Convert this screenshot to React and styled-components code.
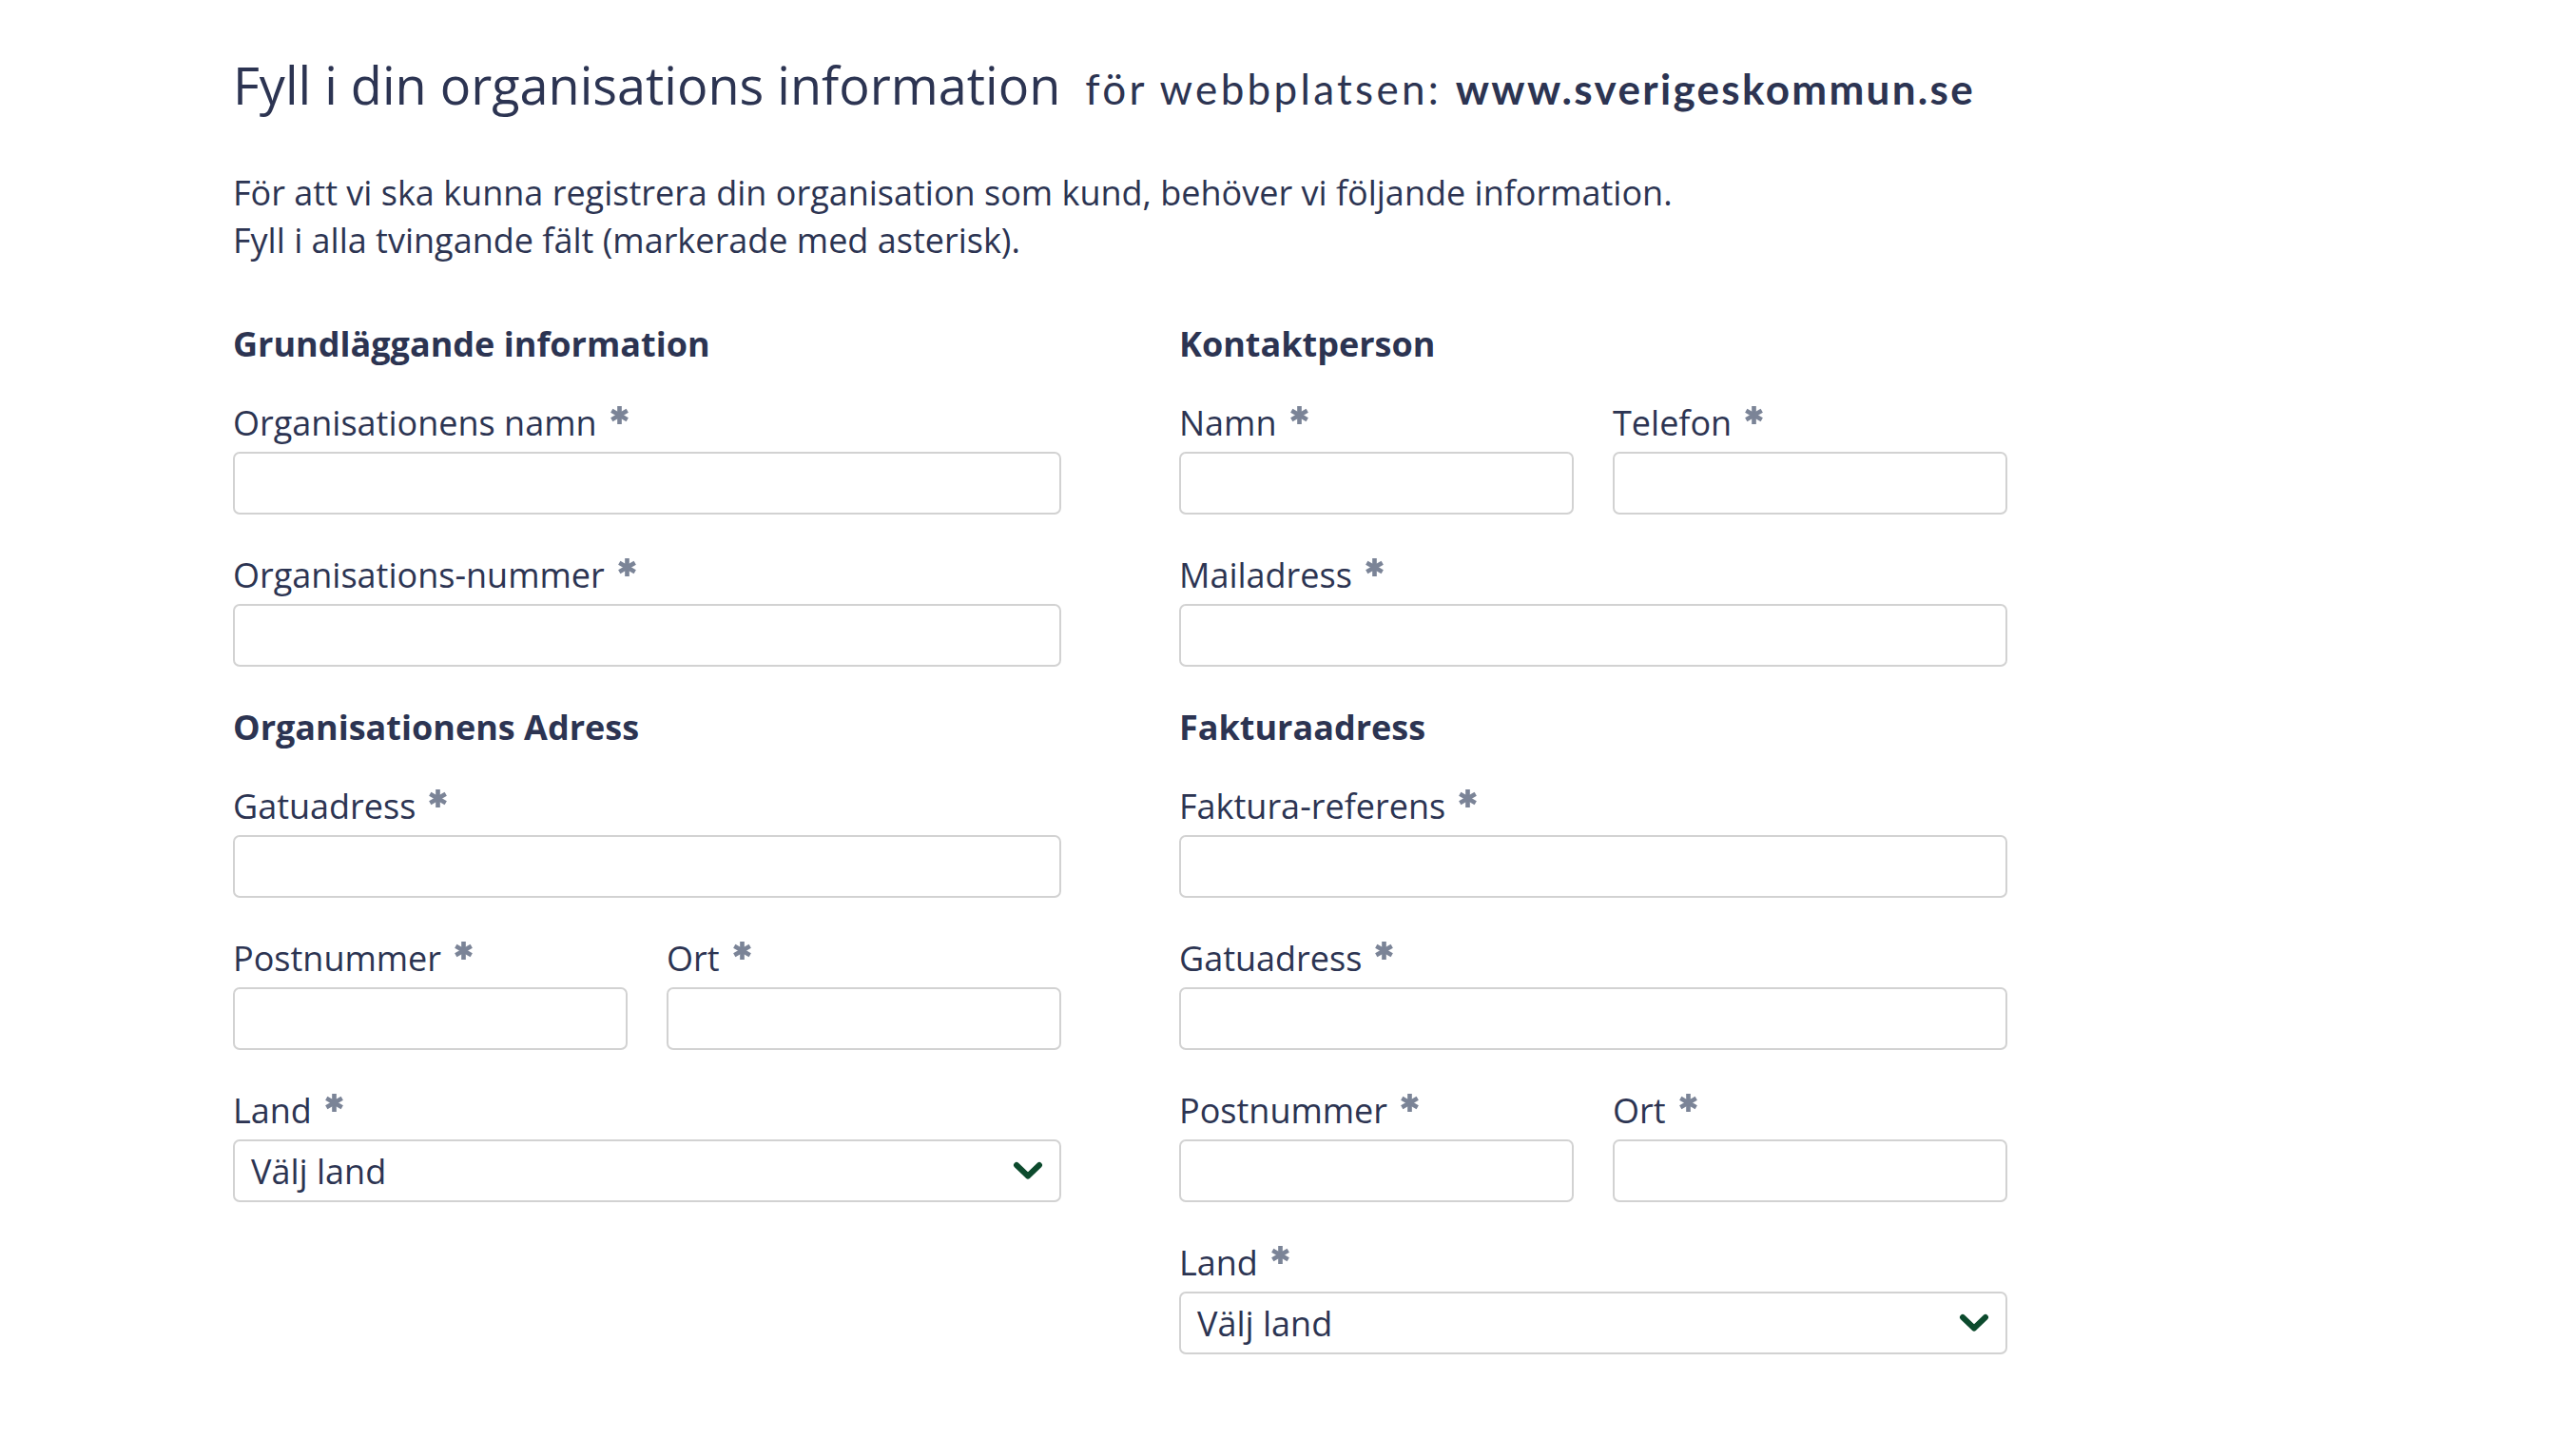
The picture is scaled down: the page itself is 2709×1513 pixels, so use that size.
import React from 'react';
import styled, { createGlobalStyle } from 'styled-components';

const GlobalStyle = createGlobalStyle`
  html, body {
    margin: 0;
    padding: 0;
    background: #ffffff;
  }
  body {
    font-family: "Open Sans", "Liberation Sans", sans-serif;
    color: #2c3452;
  }
`;

const Page = styled.div`
  padding: 55px 0 80px 245px;
  box-sizing: border-box;
`;

const TitleRow = styled.div`
  display: flex;
  align-items: baseline;
  gap: 26px;
`;

const Title = styled.h1`
  margin: 0;
  font-size: 54px;
  line-height: 68px;
  font-weight: 400;
  color: #2c3452;
`;

const SiteNote = styled.span`
  font-family: "Lato", "DejaVu Sans", sans-serif;
  font-size: 44px;
  letter-spacing: 3.3px;
  color: #2c3452;

  strong {
    font-weight: 700;
    letter-spacing: 2.3px;
  }
`;

const Intro = styled.p`
  margin: 55px 0 0;
  font-size: 36px;
  line-height: 50px;
  color: #2c3452;
`;

const Columns = styled.div`
  display: grid;
  grid-template-columns: 871px 871px;
  column-gap: 124px;
  margin-top: 62px;
`;

const Column = styled.div`
  display: flex;
  flex-direction: column;
`;

const SectionTitle = styled.h2`
  margin: ${p => (p.$first ? '0' : '2px')} 0 37px;
  font-size: 36px;
  line-height: 44px;
  font-weight: 700;
  color: #2c3452;
`;

const Row = styled.div`
  display: grid;
  grid-template-columns: 1fr 1fr;
  column-gap: 41px;
`;

const Field = styled.div`
  display: flex;
  flex-direction: column;
  margin-bottom: 40px;
`;

const Label = styled.label`
  display: flex;
  align-items: flex-start;
  font-size: 36px;
  line-height: 48px;
  color: #2c3452;
  margin-bottom: 6px;
`;

const Star = styled.svg`
  width: 19px;
  height: 19px;
  margin: 6px 0 0 14px;
  flex: none;
`;

const TextInput = styled.input`
  box-sizing: border-box;
  width: 100%;
  height: 66px;
  border: 2px solid #d2d2d2;
  border-radius: 7px;
  padding: 0 16px;
  font-family: "Open Sans", "Liberation Sans", sans-serif;
  font-size: 36px;
  color: #2c3452;
  background: #fff;
  outline: none;
`;

const SelectBox = styled.div`
  box-sizing: border-box;
  height: 66px;
  border: 2px solid #d2d2d2;
  border-radius: 7px;
  padding: 0 17px;
  display: flex;
  align-items: center;
  justify-content: space-between;
  font-size: 36px;
  color: #2c3452;
  background: #fff;
  cursor: pointer;
`;

const Chevron = styled.svg`
  width: 32px;
  height: 20px;
  flex: none;
`;

function Asterisk() {
  return (
    <Star viewBox="-9 -9 18 18" aria-hidden="true">
      <g stroke="#7b8497" strokeWidth="4.4">
        <line x1="0" y1="-9" x2="0" y2="9" />
        <line x1="-7.8" y1="-4.5" x2="7.8" y2="4.5" />
        <line x1="-7.8" y1="4.5" x2="7.8" y2="-4.5" />
      </g>
    </Star>
  );
}

function InputField({ label }) {
  return (
    <Field>
      <Label>
        {label}
        <Asterisk />
      </Label>
      <TextInput type="text" />
    </Field>
  );
}

function CountryField() {
  return (
    <Field>
      <Label>
        Land
        <Asterisk />
      </Label>
      <SelectBox>
        <span>Välj land</span>
        <Chevron viewBox="0 0 32 20" aria-hidden="true">
          <path
            d="M4 4 L16 15.5 L28 4"
            fill="none"
            stroke="#0c4a2d"
            strokeWidth="6"
            strokeLinecap="round"
            strokeLinejoin="round"
          />
        </Chevron>
      </SelectBox>
    </Field>
  );
}

export default function App() {
  return (
    <Page>
      <GlobalStyle />
      <TitleRow>
        <Title>Fyll i din organisations information</Title>
        <SiteNote>
          för webbplatsen: <strong>www.sverigeskommun.se</strong>
        </SiteNote>
      </TitleRow>

      <Intro>
        För att vi ska kunna registrera din organisation som kund, behöver vi följande information.
        <br />
        Fyll i alla tvingande fält (markerade med asterisk).
      </Intro>

      <Columns>
        <Column>
          <SectionTitle $first>Grundläggande information</SectionTitle>
          <InputField label="Organisationens namn" />
          <InputField label="Organisations-nummer" />

          <SectionTitle>Organisationens Adress</SectionTitle>
          <InputField label="Gatuadress" />
          <Row>
            <InputField label="Postnummer" />
            <InputField label="Ort" />
          </Row>
          <CountryField />
        </Column>

        <Column>
          <SectionTitle $first>Kontaktperson</SectionTitle>
          <Row>
            <InputField label="Namn" />
            <InputField label="Telefon" />
          </Row>
          <InputField label="Mailadress" />

          <SectionTitle>Fakturaadress</SectionTitle>
          <InputField label="Faktura-referens" />
          <InputField label="Gatuadress" />
          <Row>
            <InputField label="Postnummer" />
            <InputField label="Ort" />
          </Row>
          <CountryField />
        </Column>
      </Columns>
    </Page>
  );
}
